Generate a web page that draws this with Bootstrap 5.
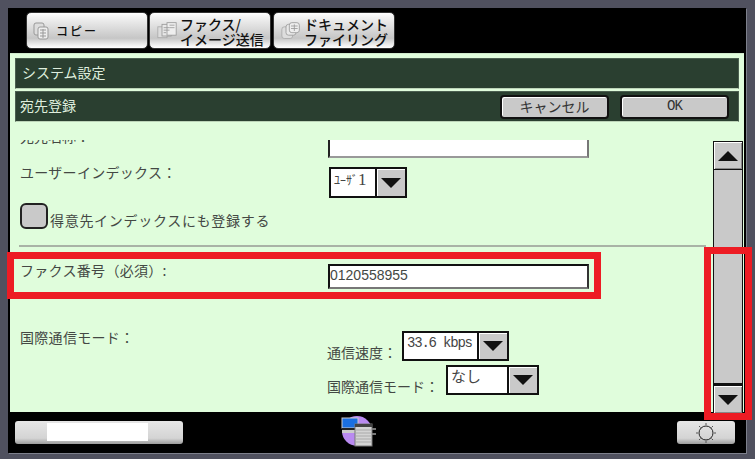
<!DOCTYPE html>
<html lang="ja">
<head>
    <meta charset="UTF-8">
    <title>宛先登録</title>
    <link href="https://cdn.jsdelivr.net/npm/bootstrap@5.3.0/dist/css/bootstrap.min.css" rel="stylesheet">
    <style>
        html, body { height: 100%; }
        body {
            width: 755px; height: 459px; overflow: hidden;
            background-color: #50515f;
            font-family: "Noto Sans CJK JP", "Liberation Sans", sans-serif;
            font-size: 14px; line-height: 16px; color: #444844;
            padding: 8px 9px 6px 8px;
        }
        .panel-screen {
            height: 445px; background: #000;
            box-shadow: 1px 1px 0 #7d808c;
        }
        .tab-bar { height: 45px; padding: 4px 0 0 18px; gap: 1px; }
        .tab-btn {
            height: 37px; width: 122px; padding-left: 7px; gap: 3px;
            background: linear-gradient(#fff 0, #f2f2f2 12%, #c6c6c6 72%, #e8e8e8 88%, #fff 100%);
            border-radius: 5px; border: 1px solid #333;
            color: #111; font-weight: 500; line-height: 15px;
        }
        .tab-text { white-space: nowrap; display: block; padding-top: 2px; }
        .tab-copy { letter-spacing: 2px; font-size: 12px; margin-left: 4px; }
        .main-pane {
            margin: 0 2px; height: 359px; background: #e0fddc;
            border-top: 1px solid #cfe9cb;
        }
        .head-wrap { padding: 4px 5px 0; }
        .head-bar {
            height: 31px; background: #2a3f30; color: #dfeedd;
            border: 1px solid #4b5f50; border-bottom-color: #bcd3b8;
            padding: 0 9px 0 4px; margin-bottom: 2px; font-size: 14px;
        }
        .head-bar-top { height: 31px; padding-left: 6px; }
        .head-text { margin-top: -3px; }
        .act-btn {
            width: 109px; height: 24px; background: #c9c9c9; color: #333;
            border: 2px solid #111; border-radius: 4px;
            box-shadow: inset 1px 1px 0 #fff; font-size: 14px; line-height: 18px;
        }
        .act-ok { font-family: "Liberation Mono", monospace; letter-spacing: -1px; margin-left: 11px; }
        .form-clip { margin-top: 16px; height: 274px; }
        .form-col { width: 696px; padding-left: 10px; }
        .field-label { width: 308px; flex: none; margin-top: -2px; letter-spacing: .3px; }
        .text-box {
            width: 261px; background: #fff; flex: none;
            border: 2px solid #222; border-color: #222 #777 #999 #222;
        }
        .pull-row { height: 18px; }
        .pull-label { margin-top: -12px; letter-spacing: 0; }
        .pull-box { height: 27px; margin-top: -9px; border-top: 0; }
        .drop-box {
            height: 31px; display: flex; border: 2px solid #111; background: #fff;
            flex: none;
        }
        .drop-val { padding: 2px 0 0 3px; color: #444; }
        .drop-kana { font-size: 12px; }
        .drop-num { font-family: "Liberation Serif", serif; font-size: 17px; }
        .drop-arrow {
            width: 30px; background: #c9c9c9; border-left: 2px solid #111;
            box-shadow: inset 1px 1px 0 #fff; flex: none;
        }
        .tick-box {
            width: 28px; height: 26px; background: #c9c9c9;
            border: 2px solid #222; border-radius: 6px; flex: none;
        }
        .tick-text { margin: 0 0 1px 2px; letter-spacing: .7px; }
        .split-line { height: 2px; background: #a9b3a6; margin: 16px 0 0 -1px; }
        .scroll-col { width: 30px; margin-left: 7px; margin-top: 17px; }
        .scroll-btn {
            height: 29px; background: #c9c9c9; border: 1px solid #111;
            box-shadow: inset 1px 1px 0 #fff, inset -1px -1px 0 #888;
        }
        .scroll-track { height: 215px; background: #c9c9c9; border: 1px solid #111; border-top: 0; border-bottom-width: 2px; }
        .foot-bar { height: 40px; padding: 9px 11px 0 7px; }
        .foot-btn {
            height: 23px; border-radius: 3px;
            background: linear-gradient(#e6e6e6, #d4d4d4 75%, #9c9c9c);
        }
        .foot-left { width: 168px; padding: 2px 35px 3px 32px; }
        .foot-fill { background: #fff; height: 100%; }
        .foot-right { width: 58px; }
        .foot-icon { margin: -6px 0 0 158px; }
        .mark-red { position: absolute; border: 7px solid #ed1c24; }
        .mark-fax { left: 7px; top: 252px; width: 594px; height: 47px; }
        .mark-scroll { left: 704px; top: 247px; width: 48px; height: 173px; }
    </style>
</head>
<body class="position-relative">
    <div class="panel-screen d-flex flex-column">
        <div class="tab-bar d-flex">
            <div class="tab-btn d-flex align-items-center" style="padding-left:6px">
                <svg width="16" height="18" viewBox="0 0 16 18"><rect x="1" y="1" width="10" height="12" rx="2" fill="#ddd" stroke="#999"/><rect x="5" y="5" width="10" height="12" rx="2" fill="#eee" stroke="#999"/><path d="M7 8h6M7 11h6M7 14h6M10 7v9" stroke="#999"/></svg>
                <span class="tab-copy">コピー</span>
            </div>
            <div class="tab-btn d-flex align-items-center">
                <svg width="20" height="20" viewBox="0 0 24 22"><rect x="1" y="6" width="11" height="13" fill="#ddd" stroke="#aaa"/><rect x="6" y="3" width="11" height="14" fill="#e8e8e8" stroke="#999"/><rect x="12" y="1" width="11" height="15" fill="#eee" stroke="#999"/><path d="M8 7h7M8 10h7M8 13h3M15 4h6M15 7h6" stroke="#999"/></svg>
                <span class="tab-text">ファクス/<br>イメージ送信</span>
            </div>
            <div class="tab-btn d-flex align-items-center" style="margin-left:1px">
                <svg width="20" height="20" viewBox="0 0 24 22"><rect x="1" y="6" width="13" height="14" rx="3" fill="#ddd" stroke="#aaa"/><rect x="6" y="3" width="12" height="13" rx="3" fill="#e8e8e8" stroke="#999"/><rect x="10" y="1" width="12" height="12" rx="3" fill="#eee" stroke="#999"/><path d="M12 5h8M12 8h8M16 3v8" stroke="#999"/></svg>
                <span class="tab-text">ドキュメント<br>ファイリング</span>
            </div>
        </div>
        <div class="main-pane">
            <div class="head-wrap">
                <div class="head-bar head-bar-top d-flex align-items-center"><span class="head-text">システム設定</span></div>
                <div class="head-bar d-flex align-items-center justify-content-between">
                    <span class="head-text">宛先登録</span>
                    <div class="d-flex">
                        <div class="act-btn text-center">キャンセル</div>
                        <div class="act-btn act-ok text-center">OK</div>
                    </div>
                </div>
            </div>
            <div class="d-flex">
                <div class="form-clip form-col overflow-hidden">
                    <div class="pull-row d-flex overflow-hidden">
                        <div class="field-label pull-label">宛先名称&#xFF1A;</div>
                        <div class="text-box pull-box"></div>
                    </div>
                    <div class="d-flex" style="margin-top:8px;height:37px">
                        <div class="field-label">ユーザーインデックス&#xFF1A;</div>
                        <div class="drop-box" style="width:78px;margin:1px 0 0 1px">
                            <div class="drop-val flex-grow-1 text-nowrap"><span class="drop-kana">ﾕｰｻﾞ</span><span class="drop-num">1</span></div>
                            <div class="drop-arrow d-flex align-items-center justify-content-center"><svg width="20" height="10"><path d="M0 0h20L10 10z" fill="#111"/></svg></div>
                        </div>
                    </div>
                    <div class="d-flex align-items-end" style="height:26px">
                        <div class="tick-box"></div>
                        <span class="tick-text">得意先インデックスにも登録する</span>
                    </div>
                    <div class="split-line"></div>
                    <div class="d-flex" style="margin-top:17px;height:25px">
                        <div class="field-label">ファクス番号&#xFF08;必須&#xFF09;:</div>
                        <div class="text-box" style="height:25px;font-family:'Liberation Sans',sans-serif;line-height:18px;border-color:#111 #333 #777 #111">0120558955</div>
                    </div>
                    <div class="d-flex" style="margin-top:42px;height:64px">
                        <div class="field-label">国際通信モード&#xFF1A;</div>
                        <div>
                            <div class="d-flex align-items-start" style="height:34px;margin-left:-1px">
                                <span style="margin-top:13px;width:75px">通信速度&#xFF1A;</span>
                                <div class="drop-box" style="width:107px;height:30px">
                                    <div class="drop-val flex-grow-1 text-nowrap" style="font-family:'Liberation Mono',monospace;letter-spacing:-1.2px">33.6 kbps</div>
                                    <div class="drop-arrow d-flex align-items-center justify-content-center"><svg width="20" height="10"><path d="M0 0h20L10 10z" fill="#111"/></svg></div>
                                </div>
                            </div>
                            <div class="d-flex align-items-start" style="margin-left:-1px">
                                <span style="margin-top:13px;width:119px">国際通信モード&#xFF1A;</span>
                                <div class="drop-box" style="width:93px;height:30px">
                                    <div class="drop-val flex-grow-1 text-nowrap" style="padding-top:1px;font-size:15px">なし</div>
                                    <div class="drop-arrow d-flex align-items-center justify-content-center"><svg width="20" height="10"><path d="M0 0h20L10 10z" fill="#111"/></svg></div>
                                </div>
                            </div>
                        </div>
                    </div>
                </div>
                <div class="scroll-col">
                    <div class="scroll-btn d-flex align-items-center justify-content-center"><svg width="20" height="10"><path d="M0 10h20L10 0z" fill="#111"/></svg></div>
                    <div class="scroll-track"></div>
                    <div class="scroll-btn d-flex align-items-center justify-content-center"><svg width="20" height="10"><path d="M0 0h20L10 10z" fill="#111"/></svg></div>
                </div>
            </div>
        </div>
        <div class="foot-bar d-flex">
            <div class="foot-btn foot-left"><div class="foot-fill"></div></div>
            <svg class="foot-icon" width="35" height="32" viewBox="0 0 35 32">
                <circle cx="16" cy="16" r="15" fill="#b98af0"/>
                <rect x="1" y="3" width="16" height="10" fill="#1a6fe0" stroke="#ccc"/>
                <rect x="1" y="13" width="16" height="2" fill="#222"/>
                <rect x="1" y="15" width="16" height="3" fill="#ccc"/>
                <rect x="14" y="9" width="17" height="22" fill="#d4d4d4" stroke="#777"/>
                <rect x="14" y="9" width="17" height="3" fill="#444"/>
                <path d="M15 15h15M15 18h15M15 21h15M15 24h15M15 27h15" stroke="#aaa"/>
                <path d="M31 14h4M31 19h4" stroke="#777" stroke-width="2"/>
            </svg>
            <div class="foot-btn foot-right d-flex align-items-center justify-content-center ms-auto">
                <svg width="22" height="22" viewBox="0 0 22 22"><circle cx="11" cy="11" r="7" fill="none" stroke="#222"/><path d="M11 1v2M11 19v2M1 11h2M19 11h2M4 4l1.500 1.500M16.500 16.500L18 18M4 18l1.500-1.500M16.500 5.500L18 4" stroke="#555"/></svg>
            </div>
        </div>
    </div>
    <div class="mark-red mark-fax"></div>
    <div class="mark-red mark-scroll"></div>

    <script src="https://cdn.jsdelivr.net/npm/bootstrap@5.3.0/dist/js/bootstrap.bundle.min.js"></script>
</body>
</html>
